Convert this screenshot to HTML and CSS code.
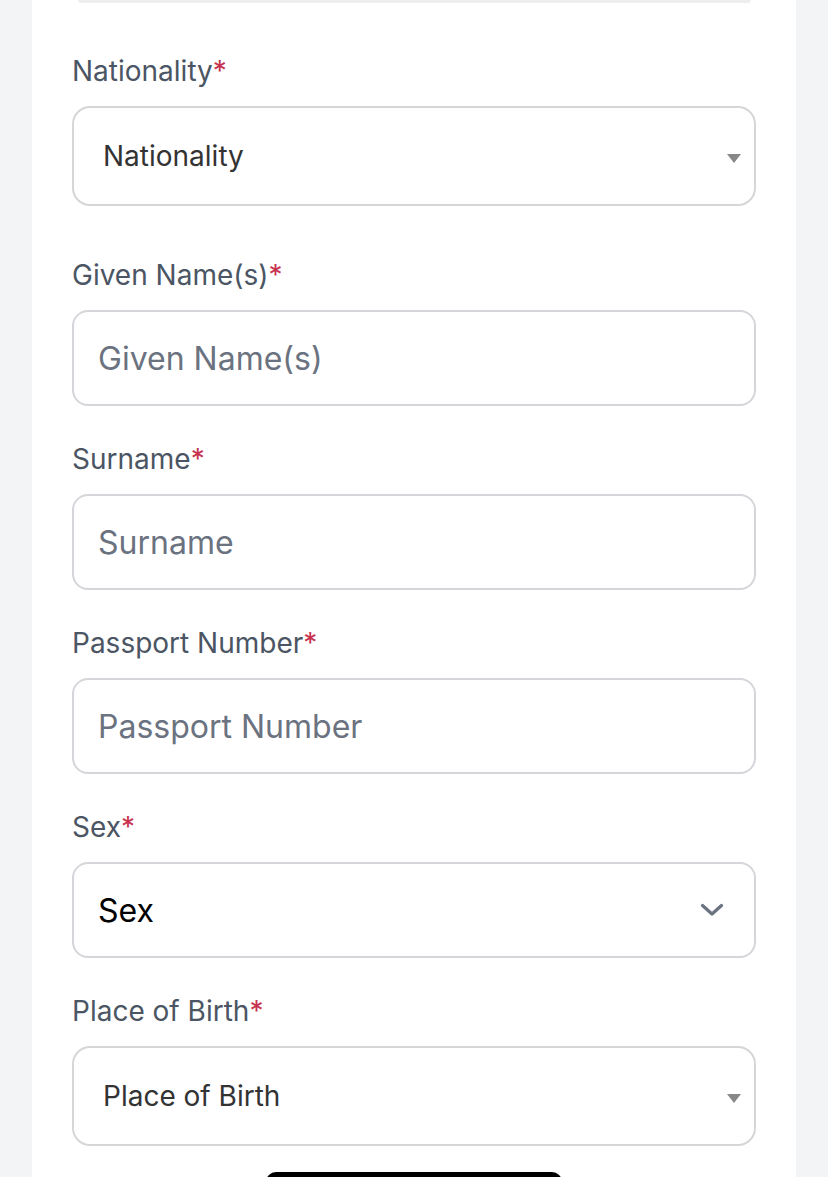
FILE: index.html
```html
<!DOCTYPE html>
<html lang="en">
<head>
<meta charset="utf-8">
<title>Form</title>
<link rel="stylesheet" href="styles.css">
</head>
<body>
<div class="page">
  <div class="card">
    <div class="prev-edge"></div>

    <div class="field field-first">
      <label class="label">Nationality<span class="req">*</span></label>
      <div class="select2">
        <span class="select2-text">Nationality</span>
        <svg class="tri" width="14" height="9" viewBox="0 0 14 9"><path d="M0 0H14L7 9Z" fill="#888"/></svg>
      </div>
    </div>

    <div class="field">
      <label class="label">Given Name(s)<span class="req">*</span></label>
      <input class="input" type="text" placeholder="Given Name(s)">
    </div>

    <div class="field">
      <label class="label">Surname<span class="req">*</span></label>
      <input class="input" type="text" placeholder="Surname">
    </div>

    <div class="field">
      <label class="label">Passport Number<span class="req">*</span></label>
      <input class="input" type="text" placeholder="Passport Number">
    </div>

    <div class="field">
      <label class="label">Sex<span class="req">*</span></label>
      <div class="native-select">
        <span class="native-text">Sex</span>
        <svg class="chev" width="24" height="14" viewBox="0 0 24 14"><path d="M2.5 2.5L12 11L21.5 2.5" fill="none" stroke="#6b7280" stroke-width="3.2" stroke-linecap="round" stroke-linejoin="round"/></svg>
      </div>
    </div>

    <div class="field">
      <label class="label">Place of Birth<span class="req">*</span></label>
      <div class="select2">
        <span class="select2-text">Place of Birth</span>
        <svg class="tri" width="14" height="9" viewBox="0 0 14 9"><path d="M0 0H14L7 9Z" fill="#888"/></svg>
      </div>
    </div>

    <div class="actions">
      <div class="btn"></div>
    </div>
  </div>
</div>
</body>
</html>
```

FILE: styles.css
```css
* { box-sizing: border-box; }
html, body {
  margin: 0;
  padding: 0;
  background: #f3f4f6;
  font-family: Inter, "Noto Sans", sans-serif;
  height: 1177px;
  overflow: hidden;
}
.page {
  padding: 0 32px;
}
.card {
  background: #ffffff;
  padding: 0 40px;
  min-height: 1177px;
}
.prev-edge {
  height: 3px;
  margin: 0 5px 0 6px;
  background: #eeeeee;
  border-radius: 0 0 14px 14px;
}
.field {
  margin-top: 35px;
}
.field-first {
  margin-top: 50px;
  padding-bottom: 16px;
}
.label {
  display: block;
  font-size: 28px;
  line-height: 36px;
  color: #4b5563;
  margin-bottom: 17px;
}
.req {
  color: #c8324f;
}
.input {
  display: block;
  width: 100%;
  height: 96px;
  border: 2px solid #d4d6da;
  border-radius: 16px;
  padding: 0 24px;
  font-family: Inter, "Noto Sans", sans-serif;
  font-size: 32px;
  color: #111827;
  background: #fff;
  outline: none;
}
.input::placeholder {
  color: #6b7280;
}
.select2 {
  display: flex;
  align-items: center;
  justify-content: space-between;
  height: 100px;
  border: 2px solid #d6d6d6;
  border-radius: 18px;
  padding: 0 13px 0 29px;
}
.select2-text {
  font-size: 28px;
  color: #333333;
}
.tri {
  display: block;
  margin-top: 4px;
}
.native-select {
  display: flex;
  align-items: center;
  justify-content: space-between;
  height: 96px;
  border: 2px solid #d4d6da;
  border-radius: 16px;
  padding: 0 30px 0 24px;
}
.native-text {
  font-size: 32px;
  color: #000000;
}
.chev {
  display: block;
}
.actions {
  display: flex;
  justify-content: center;
  margin-top: 26px;
}
.btn {
  width: 296px;
  height: 60px;
  background: #000;
  border-radius: 10px;
}
```
